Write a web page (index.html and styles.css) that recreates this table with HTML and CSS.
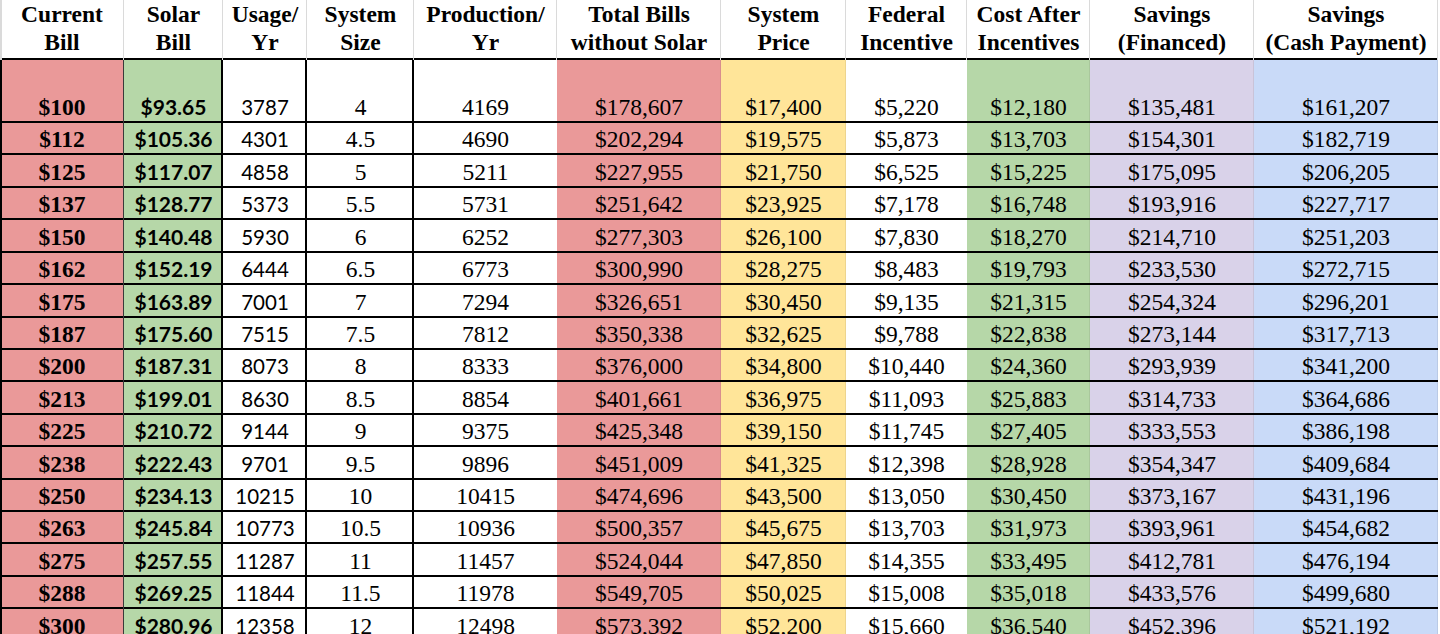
FILE: index.html
```html
<!DOCTYPE html>
<html>
<head>
<meta charset="utf-8">
<title>Solar Savings Table</title>
<link rel="stylesheet" href="styles.css">
</head>
<body>
<table class="sheet">
  <colgroup>
    <col class="w1"><col class="w2"><col class="w3"><col class="w4"><col class="w5"><col class="w6"><col class="w7"><col class="w8"><col class="w9"><col class="w10"><col class="w11">
  </colgroup>
  <thead>
    <tr class="head">
      <th class="first">Current<br>Bill</th>
      <th>Solar<br>Bill</th>
      <th>Usage/<br>Yr</th>
      <th>System<br>Size</th>
      <th>Production/<br>Yr</th>
      <th>Total Bills<br>without Solar</th>
      <th>System<br>Price</th>
      <th>Federal<br>Incentive</th>
      <th>Cost After<br>Incentives</th>
      <th>Savings<br>(Financed)</th>
      <th>Savings<br>(Cash Payment)</th>
    </tr>
  </thead>
  <tbody>
    <tr class="tall"><td class="c1">$100</td><td class="c2">$93.65</td><td class="c3">3787</td><td class="c4">4</td><td class="c5">4169</td><td class="c6">$178,607</td><td class="c7">$17,400</td><td class="c8">$5,220</td><td class="c9">$12,180</td><td class="c10">$135,481</td><td class="c11">$161,207</td></tr>
    <tr><td class="c1">$112</td><td class="c2">$105.36</td><td class="c3">4301</td><td class="c4">4.5</td><td class="c5">4690</td><td class="c6">$202,294</td><td class="c7">$19,575</td><td class="c8">$5,873</td><td class="c9">$13,703</td><td class="c10">$154,301</td><td class="c11">$182,719</td></tr>
    <tr><td class="c1">$125</td><td class="c2">$117.07</td><td class="c3">4858</td><td class="c4">5</td><td class="c5">5211</td><td class="c6">$227,955</td><td class="c7">$21,750</td><td class="c8">$6,525</td><td class="c9">$15,225</td><td class="c10">$175,095</td><td class="c11">$206,205</td></tr>
    <tr><td class="c1">$137</td><td class="c2">$128.77</td><td class="c3">5373</td><td class="c4">5.5</td><td class="c5">5731</td><td class="c6">$251,642</td><td class="c7">$23,925</td><td class="c8">$7,178</td><td class="c9">$16,748</td><td class="c10">$193,916</td><td class="c11">$227,717</td></tr>
    <tr><td class="c1">$150</td><td class="c2">$140.48</td><td class="c3">5930</td><td class="c4">6</td><td class="c5">6252</td><td class="c6">$277,303</td><td class="c7">$26,100</td><td class="c8">$7,830</td><td class="c9">$18,270</td><td class="c10">$214,710</td><td class="c11">$251,203</td></tr>
    <tr><td class="c1">$162</td><td class="c2">$152.19</td><td class="c3">6444</td><td class="c4">6.5</td><td class="c5">6773</td><td class="c6">$300,990</td><td class="c7">$28,275</td><td class="c8">$8,483</td><td class="c9">$19,793</td><td class="c10">$233,530</td><td class="c11">$272,715</td></tr>
    <tr><td class="c1">$175</td><td class="c2">$163.89</td><td class="c3">7001</td><td class="c4">7</td><td class="c5">7294</td><td class="c6">$326,651</td><td class="c7">$30,450</td><td class="c8">$9,135</td><td class="c9">$21,315</td><td class="c10">$254,324</td><td class="c11">$296,201</td></tr>
    <tr><td class="c1">$187</td><td class="c2">$175.60</td><td class="c3">7515</td><td class="c4">7.5</td><td class="c5">7812</td><td class="c6">$350,338</td><td class="c7">$32,625</td><td class="c8">$9,788</td><td class="c9">$22,838</td><td class="c10">$273,144</td><td class="c11">$317,713</td></tr>
    <tr><td class="c1">$200</td><td class="c2">$187.31</td><td class="c3">8073</td><td class="c4">8</td><td class="c5">8333</td><td class="c6">$376,000</td><td class="c7">$34,800</td><td class="c8">$10,440</td><td class="c9">$24,360</td><td class="c10">$293,939</td><td class="c11">$341,200</td></tr>
    <tr><td class="c1">$213</td><td class="c2">$199.01</td><td class="c3">8630</td><td class="c4">8.5</td><td class="c5">8854</td><td class="c6">$401,661</td><td class="c7">$36,975</td><td class="c8">$11,093</td><td class="c9">$25,883</td><td class="c10">$314,733</td><td class="c11">$364,686</td></tr>
    <tr><td class="c1">$225</td><td class="c2">$210.72</td><td class="c3">9144</td><td class="c4">9</td><td class="c5">9375</td><td class="c6">$425,348</td><td class="c7">$39,150</td><td class="c8">$11,745</td><td class="c9">$27,405</td><td class="c10">$333,553</td><td class="c11">$386,198</td></tr>
    <tr><td class="c1">$238</td><td class="c2">$222.43</td><td class="c3">9701</td><td class="c4">9.5</td><td class="c5">9896</td><td class="c6">$451,009</td><td class="c7">$41,325</td><td class="c8">$12,398</td><td class="c9">$28,928</td><td class="c10">$354,347</td><td class="c11">$409,684</td></tr>
    <tr><td class="c1">$250</td><td class="c2">$234.13</td><td class="c3">10215</td><td class="c4">10</td><td class="c5">10415</td><td class="c6">$474,696</td><td class="c7">$43,500</td><td class="c8">$13,050</td><td class="c9">$30,450</td><td class="c10">$373,167</td><td class="c11">$431,196</td></tr>
    <tr><td class="c1">$263</td><td class="c2">$245.84</td><td class="c3">10773</td><td class="c4">10.5</td><td class="c5">10936</td><td class="c6">$500,357</td><td class="c7">$45,675</td><td class="c8">$13,703</td><td class="c9">$31,973</td><td class="c10">$393,961</td><td class="c11">$454,682</td></tr>
    <tr><td class="c1">$275</td><td class="c2">$257.55</td><td class="c3">11287</td><td class="c4">11</td><td class="c5">11457</td><td class="c6">$524,044</td><td class="c7">$47,850</td><td class="c8">$14,355</td><td class="c9">$33,495</td><td class="c10">$412,781</td><td class="c11">$476,194</td></tr>
    <tr><td class="c1">$288</td><td class="c2">$269.25</td><td class="c3">11844</td><td class="c4">11.5</td><td class="c5">11978</td><td class="c6">$549,705</td><td class="c7">$50,025</td><td class="c8">$15,008</td><td class="c9">$35,018</td><td class="c10">$433,576</td><td class="c11">$499,680</td></tr>
    <tr><td class="c1">$300</td><td class="c2">$280.96</td><td class="c3">12358</td><td class="c4">12</td><td class="c5">12498</td><td class="c6">$573,392</td><td class="c7">$52,200</td><td class="c8">$15,660</td><td class="c9">$36,540</td><td class="c10">$452,396</td><td class="c11">$521,192</td></tr>
  </tbody>
</table>
</body>
</html>
```

FILE: styles.css
```css
html, body {
  margin: 0;
  padding: 0;
  background: #ffffff;
  overflow: hidden;
}

.sheet {
  table-layout: fixed;
  width: 1438px;
  border-collapse: separate;
  border-spacing: 0;
  font-family: "Liberation Serif", "Times New Roman", serif;
  font-size: 23.5px;
  font-weight: 400;
  color: #000;
}

.w1 { width: 124px; }
.w2 { width: 99px; }
.w3 { width: 84px; }
.w4 { width: 107px; }
.w5 { width: 143px; }
.w6 { width: 164px; }
.w7 { width: 125px; }
.w8 { width: 121px; }
.w9 { width: 123px; }
.w10 { width: 164px; }
.w11 { width: 184px; }

.sheet th,
.sheet td {
  padding: 0 0 2px 0;
  text-align: center;
  vertical-align: bottom;
  line-height: 28px;
  white-space: nowrap;
  overflow: hidden;
  font-weight: 400;
}

/* header */
.head {
  height: 58px;
}
.sheet .head th {
  padding-bottom: 4px;
  font-weight: 700;
  box-shadow: inset -1px 0 0 #dadada, inset 0 -2px 0 #000;
}
.sheet .head th.first {
  box-shadow: inset 2px 0 0 #dadada, inset -1px 0 0 #dadada, inset 0 -2px 0 #000;
}

/* body rows */
.sheet tbody tr {
  height: 32.43px;
}
.sheet tbody tr.tall {
  height: 63px;
}
.sheet td {
  box-shadow: inset 0 -2px 0 #000;
}

.sheet td.c1 {
  background: #ea9999;
  font-weight: 700;
  box-shadow: inset 2px 0 0 #000, inset -1px 0 0 #3a3a3a, inset 0 -2px 0 #000;
}

.sheet td.c2 {
  background: #b6d7a8;
  font-family: Lato, "Open Sans", sans-serif;
  font-size: 21px;
  font-weight: 700;
  box-shadow: inset -2px 0 0 #000, inset 0 -2px 0 #000;
}

.sheet td.c3 {
  font-family: Lato, "Open Sans", sans-serif;
  font-size: 20.5px;
  box-shadow: inset -2px 0 0 #000, inset 0 -2px 0 #000;
}

.sheet td.c4 {
  box-shadow: inset -2px 0 0 #000, inset 0 -2px 0 #000;
}

.sheet td.c6 { background: #ea9999; }
.sheet td.c7 { background: #ffe599; }
.sheet td.c9 { background: #b6d7a8; }
.sheet td.c10 { background: #d9d2e9; }
.sheet td.c11 { background: #c9daf8; }

.sheet td.c6,
.sheet td.c7,
.sheet td.c9,
.sheet td.c10,
.sheet td.c11 {
  box-shadow: inset -1px 0 0 rgba(0, 0, 0, 0.07), inset 0 -2px 0 #000;
}
```
